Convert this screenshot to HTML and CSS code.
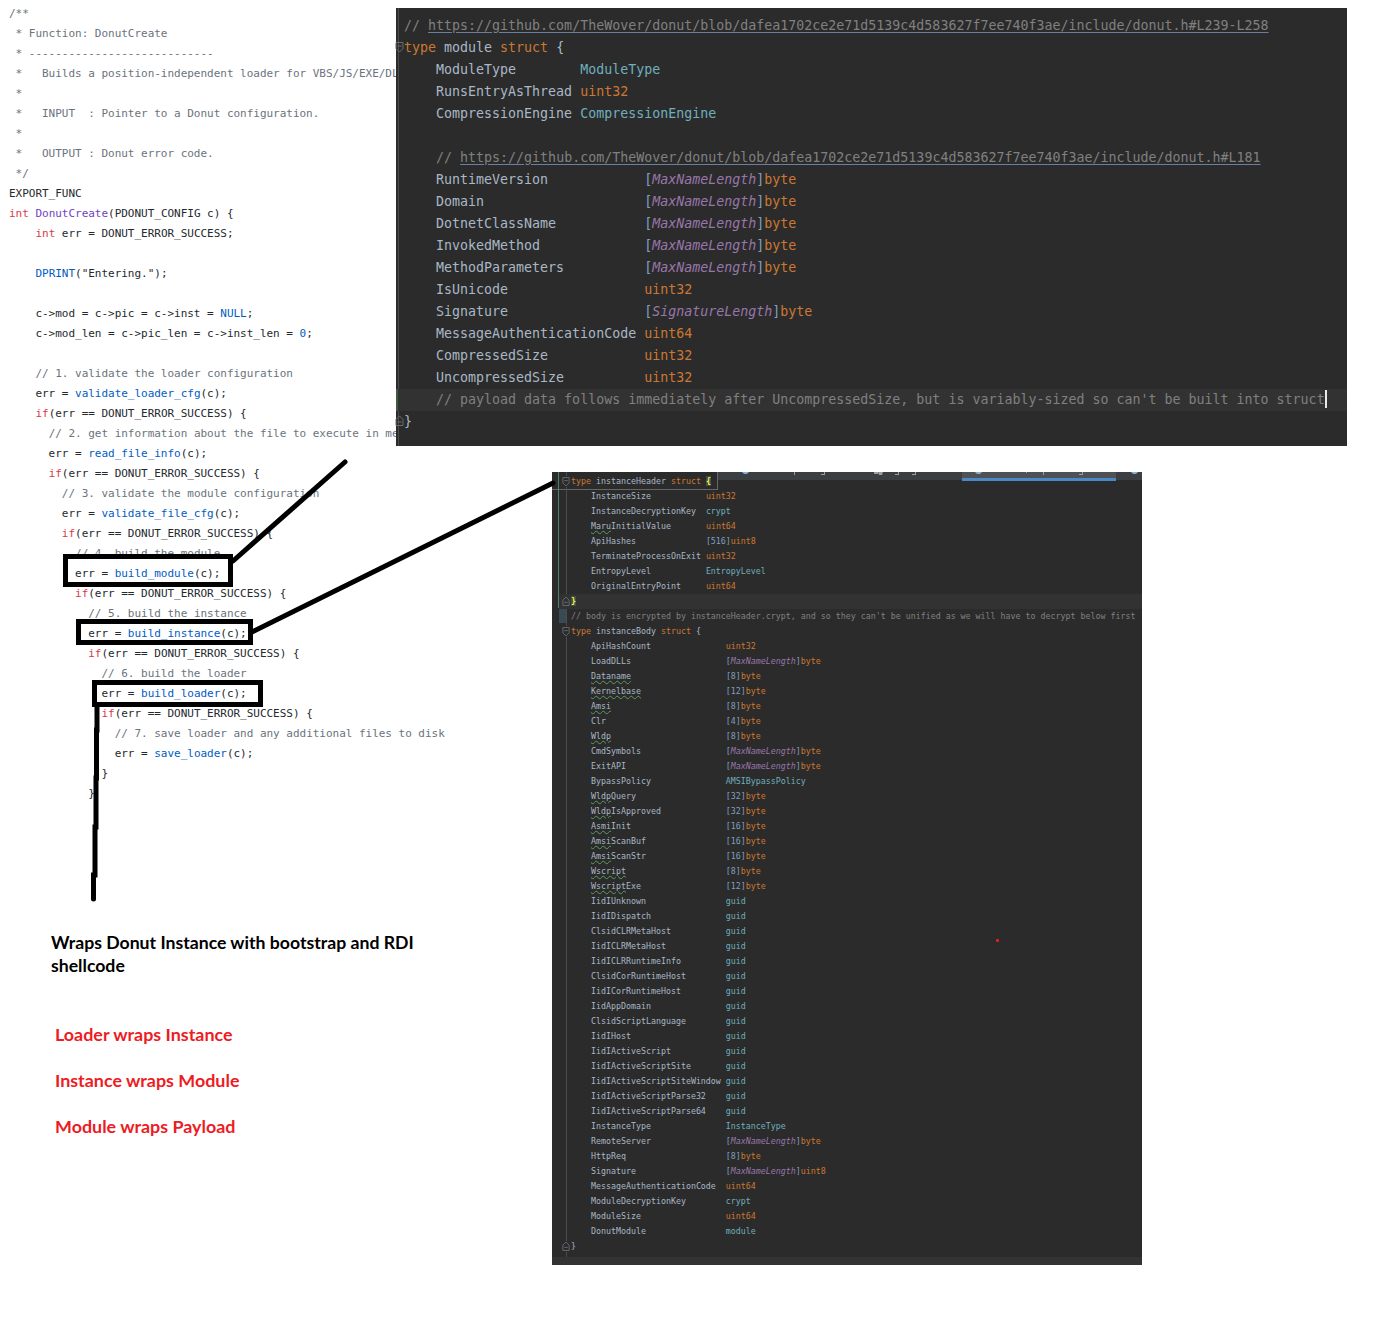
FILE: index.html
```html
<!DOCTYPE html>
<html lang="en">
<head>
<meta charset="utf-8">
<title>Donut loader structures</title>
<link rel="stylesheet" href="styles.css">
</head>
<body>
<main class="canvas">
  <section class="left-col">
    <pre class="c-code"><span class="cm">/**
 * Function: DonutCreate
 * ----------------------------
 *   Builds a position-independent loader for VBS/JS/EXE/DLL files.
 *
 *   INPUT  : Pointer to a Donut configuration.
 *
 *   OUTPUT : Donut error code.
 */</span>
EXPORT_FUNC
<span class="kw">int</span> <span class="fn">DonutCreate</span>(PDONUT_CONFIG c) {
    <span class="kw">int</span> err = DONUT_ERROR_SUCCESS;

    <span class="ca">DPRINT</span>("Entering.");

    c-&gt;mod = c-&gt;pic = c-&gt;inst = <span class="ca">NULL</span>;
    c-&gt;mod_len = c-&gt;pic_len = c-&gt;inst_len = <span class="ca">0</span>;

    <span class="cm">// 1. validate the loader configuration</span>
    err = <span class="ca">validate_loader_cfg</span>(c);
    <span class="kw">if</span>(err == DONUT_ERROR_SUCCESS) {
      <span class="cm">// 2. get information about the file to execute in memory</span>
      err = <span class="ca">read_file_info</span>(c);
      <span class="kw">if</span>(err == DONUT_ERROR_SUCCESS) {
        <span class="cm">// 3. validate the module configuration</span>
        err = <span class="ca">validate_file_cfg</span>(c);
        <span class="kw">if</span>(err == DONUT_ERROR_SUCCESS) {
          <span class="cm">// 4. build the module</span>
          err = <span class="ca">build_module</span>(c);
          <span class="kw">if</span>(err == DONUT_ERROR_SUCCESS) {
            <span class="cm">// 5. build the instance</span>
            err = <span class="ca">build_instance</span>(c);
            <span class="kw">if</span>(err == DONUT_ERROR_SUCCESS) {
              <span class="cm">// 6. build the loader</span>
              err = <span class="ca">build_loader</span>(c);
              <span class="kw">if</span>(err == DONUT_ERROR_SUCCESS) {
                <span class="cm">// 7. save loader and any additional files to disk</span>
                err = <span class="ca">save_loader</span>(c);
              }
            }</pre>
    <div class="notes">
      <p class="note-main">Wraps Donut Instance with bootstrap and RDI shellcode</p>
      <ul class="note-list">
        <li>Loader wraps Instance</li>
        <li>Instance wraps Module</li>
        <li>Module wraps Payload</li>
      </ul>
    </div>
  </section>

  <section class="pane pane-top">
    <div class="gutter-line"></div>
    <div class="ln"><span class="cm">// <span class="lk">https://github.com/TheWover/donut/blob/dafea1702ce2e71d5139c4d583627f7ee740f3ae/include/donut.h#L239-L258</span></span></div>
    <div class="ln"><svg class="fold fold-top" viewBox="0 0 9 12"><path d="M1 1.5h7v6l-3.500 3.500-3.500-3.500z M2.500 5h4"/></svg><span class="kw2">type</span> module <span class="kw2">struct</span> {</div>
    <div class="ln">    ModuleType        <span class="ty">ModuleType</span></div>
    <div class="ln">    RunsEntryAsThread <span class="kw2">uint32</span></div>
    <div class="ln">    CompressionEngine <span class="ty">CompressionEngine</span></div>
    <div class="ln"></div>
    <div class="ln">    <span class="cm">// <span class="lk">https://github.com/TheWover/donut/blob/dafea1702ce2e71d5139c4d583627f7ee740f3ae/include/donut.h#L181</span></span></div>
    <div class="ln">    RuntimeVersion            <span class="br">[</span><span class="cn">MaxNameLength</span><span class="br">]</span><span class="kw2">byte</span></div>
    <div class="ln">    Domain                    <span class="br">[</span><span class="cn">MaxNameLength</span><span class="br">]</span><span class="kw2">byte</span></div>
    <div class="ln">    DotnetClassName           <span class="br">[</span><span class="cn">MaxNameLength</span><span class="br">]</span><span class="kw2">byte</span></div>
    <div class="ln">    InvokedMethod             <span class="br">[</span><span class="cn">MaxNameLength</span><span class="br">]</span><span class="kw2">byte</span></div>
    <div class="ln">    MethodParameters          <span class="br">[</span><span class="cn">MaxNameLength</span><span class="br">]</span><span class="kw2">byte</span></div>
    <div class="ln">    IsUnicode                 <span class="kw2">uint32</span></div>
    <div class="ln">    Signature                 <span class="br">[</span><span class="cn">SignatureLength</span><span class="br">]</span><span class="kw2">byte</span></div>
    <div class="ln">    MessageAuthenticationCode <span class="kw2">uint64</span></div>
    <div class="ln">    CompressedSize            <span class="kw2">uint32</span></div>
    <div class="ln">    UncompressedSize          <span class="kw2">uint32</span></div>
    <div class="ln ln-cur">    <span class="cm">// payload data follows immediately after UncompressedSize, but is variably-sized so can't be built into struct</span><span class="caret"></span></div>
    <div class="ln"><svg class="fold fold-top" viewBox="0 0 9 12"><path d="M1 10.500h7v-6l-3.500-3.500-3.500 3.500z M2.500 7h4"/></svg>}</div>
  </section>

  <section class="pane pane-low">
    <div class="tabstrip">
      <svg class="tab-bits" viewBox="0 0 424 6"><path class="bit-blue" d="M24 0h7l-2 2h-3z M257 0h7l-2 2h-3z M413 0h7l-2 2h-3z"/><path class="bit-grey" d="M76 0h1v3h-1z M103 2h3v-2h1v3h-4z M156 0h4v2h-4z M160 0h5l-1 3h-3z M177 2h3v-2h1v3h-4z M194 2h3v-2h1v3h-4z M308 0h1v1h-1z M325 0h1v3h-1z M361 2h3v-2h1v3h-4z"/></svg>
      <div class="tab-active"></div>
    </div>
    <div class="header-box"></div>
    <div class="mark-green"></div>
    <div class="mark-blue"></div>
    <div class="gutter-line-low"></div>
    <div class="low-code">
      <div class="rw"><svg class="fold fold-low" viewBox="0 0 9 12"><path d="M1 1.500h7v6l-3.500 3.500-3.500-3.500z M2.500 5h4"/></svg><span class="kw2">type</span> instanceHeader <span class="kw2">struct</span> <span class="match">{</span></div>
      <div class="rw">    InstanceSize           <span class="kw2">uint32</span></div>
      <div class="rw">    InstanceDecryptionKey  <span class="ty">crypt</span></div>
      <div class="rw">    <span class="sq">Maru</span>InitialValue       <span class="kw2">uint64</span></div>
      <div class="rw">    ApiHashes              <span class="br">[516]</span><span class="kw2">uint8</span></div>
      <div class="rw">    TerminateProcessOnExit <span class="kw2">uint32</span></div>
      <div class="rw">    EntropyLevel           <span class="ty">EntropyLevel</span></div>
      <div class="rw">    OriginalEntryPoint     <span class="kw2">uint64</span></div>
      <div class="rw rw-cur"><svg class="fold fold-low-cur" viewBox="0 0 9 12"><path d="M1 10.500h7v-6l-3.500-3.500-3.500 3.500z M2.500 7h4"/></svg><span class="match">}</span></div>
      <div class="rw"><span class="cm">// body is encrypted by instanceHeader.crypt, and so they can't be unified as we will have to decrypt below first</span></div>
      <div class="rw"><svg class="fold fold-low" viewBox="0 0 9 12"><path d="M1 1.500h7v6l-3.500 3.500-3.500-3.500z M2.500 5h4"/></svg><span class="kw2">type</span> instanceBody <span class="kw2">struct</span> {</div>
      <div class="rw">    ApiHashCount               <span class="kw2">uint32</span></div>
      <div class="rw">    LoadDLLs                   <span class="br">[</span><span class="cn">MaxNameLength</span><span class="br">]</span><span class="kw2">byte</span></div>
      <div class="rw">    <span class="sq">Dataname</span>                   <span class="br">[8]</span><span class="kw2">byte</span></div>
      <div class="rw">    <span class="sq">Kernelbase</span>                 <span class="br">[12]</span><span class="kw2">byte</span></div>
      <div class="rw">    <span class="sq">Amsi</span>                       <span class="br">[8]</span><span class="kw2">byte</span></div>
      <div class="rw">    Clr                        <span class="br">[4]</span><span class="kw2">byte</span></div>
      <div class="rw">    <span class="sq">Wldp</span>                       <span class="br">[8]</span><span class="kw2">byte</span></div>
      <div class="rw">    CmdSymbols                 <span class="br">[</span><span class="cn">MaxNameLength</span><span class="br">]</span><span class="kw2">byte</span></div>
      <div class="rw">    ExitAPI                    <span class="br">[</span><span class="cn">MaxNameLength</span><span class="br">]</span><span class="kw2">byte</span></div>
      <div class="rw">    BypassPolicy               <span class="ty">AMSIBypassPolicy</span></div>
      <div class="rw">    <span class="sq">Wldp</span>Query                  <span class="br">[32]</span><span class="kw2">byte</span></div>
      <div class="rw">    <span class="sq">Wldp</span>IsApproved             <span class="br">[32]</span><span class="kw2">byte</span></div>
      <div class="rw">    <span class="sq">Asmi</span>Init                   <span class="br">[16]</span><span class="kw2">byte</span></div>
      <div class="rw">    <span class="sq">Amsi</span>ScanBuf                <span class="br">[16]</span><span class="kw2">byte</span></div>
      <div class="rw">    <span class="sq">Amsi</span>ScanStr                <span class="br">[16]</span><span class="kw2">byte</span></div>
      <div class="rw">    <span class="sq">Wscript</span>                    <span class="br">[8]</span><span class="kw2">byte</span></div>
      <div class="rw">    <span class="sq">Wscript</span>Exe                 <span class="br">[12]</span><span class="kw2">byte</span></div>
      <div class="rw">    IidIUnknown                <span class="ty">guid</span></div>
      <div class="rw">    IidIDispatch               <span class="ty">guid</span></div>
      <div class="rw">    ClsidCLRMetaHost           <span class="ty">guid</span></div>
      <div class="rw">    IidICLRMetaHost            <span class="ty">guid</span></div>
      <div class="rw">    IidICLRRuntimeInfo         <span class="ty">guid</span></div>
      <div class="rw">    ClsidCorRuntimeHost        <span class="ty">guid</span></div>
      <div class="rw">    IidICorRuntimeHost         <span class="ty">guid</span></div>
      <div class="rw">    IidAppDomain               <span class="ty">guid</span></div>
      <div class="rw">    ClsidScriptLanguage        <span class="ty">guid</span></div>
      <div class="rw">    IidIHost                   <span class="ty">guid</span></div>
      <div class="rw">    IidIActiveScript           <span class="ty">guid</span></div>
      <div class="rw">    IidIActiveScriptSite       <span class="ty">guid</span></div>
      <div class="rw">    IidIActiveScriptSiteWindow <span class="ty">guid</span></div>
      <div class="rw">    IidIActiveScriptParse32    <span class="ty">guid</span></div>
      <div class="rw">    IidIActiveScriptParse64    <span class="ty">guid</span></div>
      <div class="rw">    InstanceType               <span class="ty">InstanceType</span></div>
      <div class="rw">    RemoteServer               <span class="br">[</span><span class="cn">MaxNameLength</span><span class="br">]</span><span class="kw2">byte</span></div>
      <div class="rw">    HttpReq                    <span class="br">[8]</span><span class="kw2">byte</span></div>
      <div class="rw">    Signature                  <span class="br">[</span><span class="cn">MaxNameLength</span><span class="br">]</span><span class="kw2">uint8</span></div>
      <div class="rw">    MessageAuthenticationCode  <span class="kw2">uint64</span></div>
      <div class="rw">    ModuleDecryptionKey        <span class="ty">crypt</span></div>
      <div class="rw">    ModuleSize                 <span class="kw2">uint64</span></div>
      <div class="rw">    DonutModule                <span class="ty">module</span></div>
      <div class="rw"><svg class="fold fold-low" viewBox="0 0 9 12"><path d="M1 10.500h7v-6l-3.500-3.500-3.500 3.500z M2.500 7h4"/></svg>}</div>
    </div>
    <div class="low-footer"></div>
    <div class="red-dot"></div>
  </section>

  <svg class="ink" viewBox="0 0 1400 1332" aria-hidden="true">
    <rect x="65.500" y="556.500" width="165" height="28"/>
    <rect x="78.500" y="621.500" width="172" height="21"/>
    <rect x="94.500" y="682.500" width="166" height="22"/>
    <path d="M233 561 L345 462"/>
    <path d="M252 632 L553 483"/>
    <path d="M97 707 L97 730 L96.500 730 L96.500 778 L96 778 L96 827 L95 827 L95 875 L93.500 875 L93.500 899"/>
  </svg>
</main>
</body>
</html>
```
FILE: styles.css
```css
html, body {
  margin: 0;
  padding: 0;
  background: #fff;
}

.canvas {
  position: relative;
  width: 1400px;
  height: 1332px;
  overflow: hidden;
}

/* Left column: light C listing and notes */
.left-col {
  padding-top: 4px;
}

.c-code {
  margin: 0;
  padding-left: 9px;
  font: 11px/20px "DejaVu Sans Mono", monospace;
  letter-spacing: -0.02px;
  color: #24292e;
  white-space: pre;
}

.c-code .cm { color: #6a737d; }
.c-code .kw { color: #d73a49; }
.c-code .fn { color: #6f42c1; }
.c-code .ca { color: #005cc5; }

.notes {
  padding-top: 127px;
}

.note-main {
  margin: 0 0 0 51px;
  width: 380px;
  font: 700 17.650px/23px Lato, "Liberation Sans", sans-serif;
  color: #000;
}

.note-list {
  list-style: none;
  margin: 46px 0 0 55px;
  padding: 0;
  display: flex;
  flex-direction: column;
  gap: 23px;
  font: 700 17.900px/23px Lato, "Liberation Sans", sans-serif;
  color: #ed1c24;
}

/* Dark editor screenshots */
.pane {
  position: absolute;
  background: #2b2b2b;
  color: #a9b7c6;
  font-family: "DejaVu Sans Mono", monospace;
}

.pane .cm { color: #808080; }
.pane .kw2 { color: #cc7832; }
.pane .ty { color: #6fafbd; }
.pane .cn { color: #9876aa; font-style: italic; }
.pane .br { color: #7f9fc0; }

.fold {
  position: absolute;
  fill: none;
  stroke: #6a6d70;
  stroke-width: 1;
}

.pane-top {
  left: 396px;
  top: 8px;
  width: 951px;
  height: 438px;
  box-sizing: border-box;
  padding: 7px 0 0 8px;
  font-size: 13.300px;
  line-height: 22px;
}

.pane-top .ln {
  position: relative;
  height: 22px;
  white-space: pre;
}

.pane-top .lk {
  text-decoration: underline;
  text-decoration-color: #6b7f9e;
  text-underline-offset: 2px;
}

.gutter-line {
  position: absolute;
  left: 2px;
  top: 0;
  bottom: 0;
  width: 1px;
  background: #4c4c4c;
}

.fold-top {
  left: -9px;
  top: 4px;
  width: 9px;
  height: 12px;
}

.ln-cur {
  margin-left: -6px;
  padding-left: 6px;
  background: #323232;
  box-shadow: -2px 0 0 #3d5a3d;
}

.ln-cur .caret {
  display: inline-block;
  width: 0;
  height: 18px;
  border-left: 2px solid #e8e8e8;
  vertical-align: -4px;
}

.pane-low {
  left: 552px;
  top: 472px;
  width: 590px;
  height: 793px;
  display: flex;
  flex-direction: column;
  font-size: 8.300px;
  line-height: 15px;
}

.tabstrip {
  position: absolute;
  left: 166px;
  right: 0;
  top: 0;
  height: 8px;
  background: #3c3f41;
}

.tab-bits {
  position: absolute;
  left: 0;
  top: 0;
  width: 424px;
  height: 6px;
  z-index: 1;
}

.bit-blue { fill: #7fb0dc; }
.bit-grey { fill: #9aa0a4; }

.tab-active {
  position: absolute;
  left: 244px;
  width: 154px;
  top: 0;
  height: 6px;
  background: #4e5254;
  border-bottom: 3px solid #4a88c7;
}

.header-box {
  position: absolute;
  left: 0;
  top: 0;
  width: 165px;
  height: 17px;
  border-right: 1px solid #666;
  border-bottom: 1px solid #666;
}

.mark-green {
  position: absolute;
  left: 6px;
  top: 0;
  width: 1px;
  height: 136px;
  background: #4f7f6a;
}

.mark-blue {
  position: absolute;
  left: 7px;
  top: 136px;
  width: 7px;
  height: 15px;
  background: #3a4a55;
}

.gutter-line-low {
  position: absolute;
  left: 14px;
  top: 0;
  height: 785px;
  width: 1px;
  background: #4c4c4c;
}

.low-code {
  flex: 1;
  padding: 1.500px 0 0 19px;
}

.rw {
  position: relative;
  height: 15px;
  white-space: pre;
}

.rw-cur {
  margin-left: -12px;
  padding-left: 12px;
  background: #323232;
}

.fold-low {
  left: -9px;
  top: 2px;
  width: 8px;
  height: 11px;
  background: #2b2b2b;
}

.fold-low-cur {
  left: 3px;
  top: 2px;
  width: 8px;
  height: 11px;
}

.pane-low .match {
  background: #3b514d;
  color: #ffef28;
  font-weight: 700;
}

.pane-low .sq {
  text-decoration: underline wavy #5d9b60;
  text-decoration-thickness: 1px;
  text-underline-offset: 1px;
}

.low-footer {
  height: 8px;
  background: #333;
}

.red-dot {
  position: absolute;
  left: 444px;
  top: 467px;
  width: 3px;
  height: 3px;
  background: #e81c1c;
  border-radius: 1px;
}

/* Hand-drawn annotation layer */
.ink {
  position: absolute;
  left: 0;
  top: 0;
  width: 1400px;
  height: 1332px;
  pointer-events: none;
  fill: none;
  stroke: #000;
  stroke-width: 5;
  stroke-linecap: round;
}

.ink rect {
  stroke-linejoin: miter;
}
```
